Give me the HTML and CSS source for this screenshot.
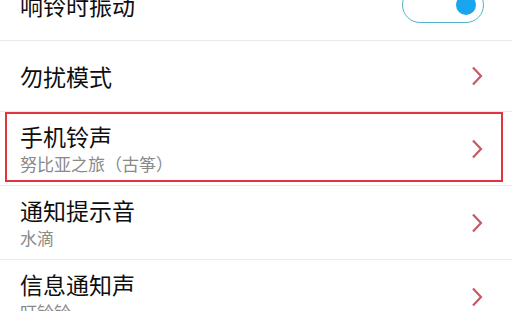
FILE: index.html
```html
<!DOCTYPE html>
<html lang="zh-CN">
<head>
<meta charset="utf-8">
<link rel="stylesheet" href="styles.css">
</head>
<body>
<div class="list">
  <div class="row single">
    <div class="text"><div class="title">响铃时振动</div></div>
    <div class="toggle"><span class="knob"></span></div>
  </div>
  <div class="row single">
    <div class="text"><div class="title">勿扰模式</div></div>
    <svg class="chev" width="12" height="20" viewBox="0 0 12 20"><polyline points="2,1.5 10,10 2,18.5" fill="none" stroke="#c45a63" stroke-width="2.2"/></svg>
  </div>
  <div class="row double highlighted">
    <div class="text"><div class="title">手机铃声</div><div class="sub">努比亚之旅（古筝）</div></div>
    <svg class="chev" width="12" height="20" viewBox="0 0 12 20"><polyline points="2,1.5 10,10 2,18.5" fill="none" stroke="#c45a63" stroke-width="2.2"/></svg>
    <div class="mark"></div>
  </div>
  <div class="row double">
    <div class="text"><div class="title">通知提示音</div><div class="sub">水滴</div></div>
    <svg class="chev" width="12" height="20" viewBox="0 0 12 20"><polyline points="2,1.5 10,10 2,18.5" fill="none" stroke="#c45a63" stroke-width="2.2"/></svg>
  </div>
  <div class="row double">
    <div class="text"><div class="title">信息通知声</div><div class="sub">叮铃铃</div></div>
    <svg class="chev" width="12" height="20" viewBox="0 0 12 20"><polyline points="2,1.5 10,10 2,18.5" fill="none" stroke="#c45a63" stroke-width="2.2"/></svg>
  </div>
</div>
</body>
</html>
```
FILE: styles.css
```css
html, body {
  margin: 0;
  padding: 0;
  background: #ffffff;
  overflow: hidden;
}
body {
  width: 527px;
  height: 311px;
  font-family: "Noto Sans CJK SC", "Noto Sans", sans-serif;
}
.list {
  width: 512px;
  margin-top: -30px;
  display: flex;
  flex-direction: column;
}
.row {
  position: relative;
  display: flex;
  align-items: center;
  justify-content: space-between;
  padding: 0 29px 0 20px;
  border-bottom: 1px solid #e9e9e9;
  box-sizing: border-box;
}
.row.single { height: 71px; }
.row.double { height: 74px; }
.title {
  font-size: 23px;
  line-height: 30px;
  color: #0e0e0e;
}
.sub {
  font-size: 17px;
  line-height: 26px;
  color: #8a8a8a;
}
.chev { display: block; }
.toggle {
  width: 82px;
  height: 36px;
  box-sizing: border-box;
  border: 1.5px solid #52b2c6;
  border-radius: 18px;
  display: flex;
  align-items: center;
  justify-content: flex-end;
  padding-right: 7px;
  margin-right: -1px;
}
.knob {
  width: 20px;
  height: 20px;
  border-radius: 50%;
  background: #1aa6ee;
}
.mark {
  position: absolute;
  left: 5px;
  top: 0;
  width: 498px;
  height: 70px;
  border: 2px solid #e2343e;
  box-sizing: border-box;
  pointer-events: none;
}
```
